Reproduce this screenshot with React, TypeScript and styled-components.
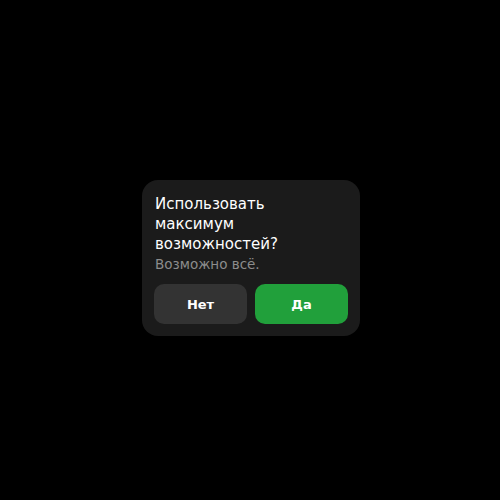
import React from "react";
import styled, { createGlobalStyle } from "styled-components";

const GlobalStyle = createGlobalStyle`
  html, body {
    margin: 0;
    padding: 0;
    background: #000;
  }
  body {
    font-family: "DejaVu Sans", sans-serif;
  }
`;

const Screen = styled.div`
  width: 500px;
  height: 500px;
  box-sizing: border-box;
  padding: 16px 0 0 2px;
  display: flex;
  align-items: center;
  justify-content: center;
  background: #000;
`;

const Card = styled.div`
  width: 218px;
  box-sizing: border-box;
  padding: 14px 12px 12px 13px;
  background: #1b1b1b;
  border-radius: 16px;
  display: flex;
  flex-direction: column;
`;

const Title = styled.div`
  color: #fff;
  font-size: 15px;
  line-height: 20px;
`;

const Subtitle = styled.div`
  color: #8c8c8c;
  font-size: 13.5px;
  line-height: 19px;
  margin-top: 1px;
`;

const Actions = styled.div`
  display: grid;
  grid-template-columns: 1fr 1fr;
  gap: 8px;
  margin-top: 10px;
  margin-left: -1px;
`;

const Button = styled.button<{ $primary?: boolean }>`
  height: 40px;
  border: none;
  border-radius: 10px;
  background: ${({ $primary }) => ($primary ? "#21a03b" : "#333333")};
  color: #fff;
  font-family: "DejaVu Sans", sans-serif;
  font-weight: bold;
  font-size: 13px;
  cursor: pointer;
`;

export default function App() {
  return (
    <>
      <GlobalStyle />
      <Screen>
        <Card>
          <Title>Использовать максимум возможностей?</Title>
          <Subtitle>Возможно всё.</Subtitle>
          <Actions>
            <Button>Нет</Button>
            <Button $primary>Да</Button>
          </Actions>
        </Card>
      </Screen>
    </>
  );
}
